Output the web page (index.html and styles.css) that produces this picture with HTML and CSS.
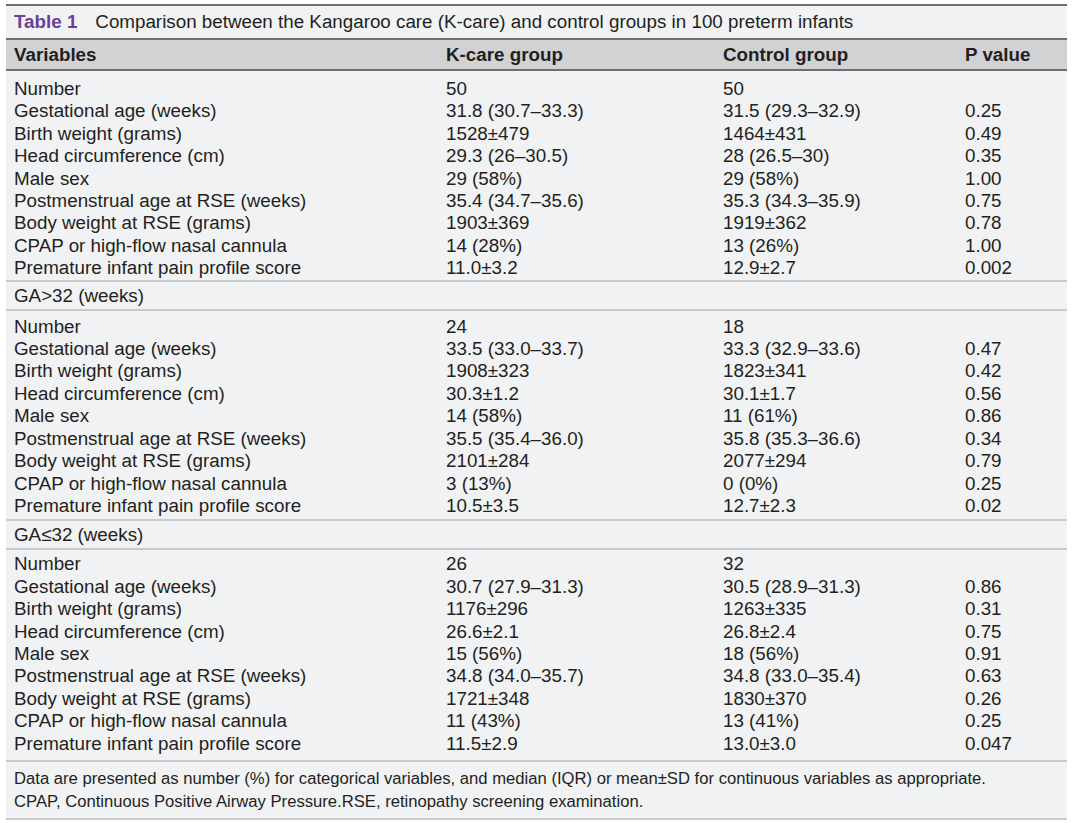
FILE: index.html
```html
<!DOCTYPE html>
<html>
<head>
<meta charset="utf-8">
<link rel="stylesheet" href="styles.css">
</head>
<body>
<div class="table">
  <div class="caption"><span class="tno">Table 1</span><span class="ctext">Comparison between the Kangaroo care (K-care) and control groups in 100 preterm infants</span></div>
  <div class="row head"><div>Variables</div><div>K-care group</div><div>Control group</div><div>P value</div></div>
  <div class="block b1">
    <div class="row"><div>Number</div><div>50</div><div>50</div><div></div></div>
    <div class="row"><div>Gestational age (weeks)</div><div>31.8 (30.7–33.3)</div><div>31.5 (29.3–32.9)</div><div>0.25</div></div>
    <div class="row"><div>Birth weight (grams)</div><div>1528±479</div><div>1464±431</div><div>0.49</div></div>
    <div class="row"><div>Head circumference (cm)</div><div>29.3 (26–30.5)</div><div>28 (26.5–30)</div><div>0.35</div></div>
    <div class="row"><div>Male sex</div><div>29 (58%)</div><div>29 (58%)</div><div>1.00</div></div>
    <div class="row"><div>Postmenstrual age at RSE (weeks)</div><div>35.4 (34.7–35.6)</div><div>35.3 (34.3–35.9)</div><div>0.75</div></div>
    <div class="row"><div>Body weight at RSE (grams)</div><div>1903±369</div><div>1919±362</div><div>0.78</div></div>
    <div class="row"><div>CPAP or high-flow nasal cannula</div><div>14 (28%)</div><div>13 (26%)</div><div>1.00</div></div>
    <div class="row"><div>Premature infant pain profile score</div><div>11.0±3.2</div><div>12.9±2.7</div><div>0.002</div></div>
  </div>
  <div class="group">GA&gt;32 (weeks)</div>
  <div class="block b2">
    <div class="row"><div>Number</div><div>24</div><div>18</div><div></div></div>
    <div class="row"><div>Gestational age (weeks)</div><div>33.5 (33.0–33.7)</div><div>33.3 (32.9–33.6)</div><div>0.47</div></div>
    <div class="row"><div>Birth weight (grams)</div><div>1908±323</div><div>1823±341</div><div>0.42</div></div>
    <div class="row"><div>Head circumference (cm)</div><div>30.3±1.2</div><div>30.1±1.7</div><div>0.56</div></div>
    <div class="row"><div>Male sex</div><div>14 (58%)</div><div>11 (61%)</div><div>0.86</div></div>
    <div class="row"><div>Postmenstrual age at RSE (weeks)</div><div>35.5 (35.4–36.0)</div><div>35.8 (35.3–36.6)</div><div>0.34</div></div>
    <div class="row"><div>Body weight at RSE (grams)</div><div>2101±284</div><div>2077±294</div><div>0.79</div></div>
    <div class="row"><div>CPAP or high-flow nasal cannula</div><div>3 (13%)</div><div>0 (0%)</div><div>0.25</div></div>
    <div class="row"><div>Premature infant pain profile score</div><div>10.5±3.5</div><div>12.7±2.3</div><div>0.02</div></div>
  </div>
  <div class="group">GA≤32 (weeks)</div>
  <div class="block b3">
    <div class="row"><div>Number</div><div>26</div><div>32</div><div></div></div>
    <div class="row"><div>Gestational age (weeks)</div><div>30.7 (27.9–31.3)</div><div>30.5 (28.9–31.3)</div><div>0.86</div></div>
    <div class="row"><div>Birth weight (grams)</div><div>1176±296</div><div>1263±335</div><div>0.31</div></div>
    <div class="row"><div>Head circumference (cm)</div><div>26.6±2.1</div><div>26.8±2.4</div><div>0.75</div></div>
    <div class="row"><div>Male sex</div><div>15 (56%)</div><div>18 (56%)</div><div>0.91</div></div>
    <div class="row"><div>Postmenstrual age at RSE (weeks)</div><div>34.8 (34.0–35.7)</div><div>34.8 (33.0–35.4)</div><div>0.63</div></div>
    <div class="row"><div>Body weight at RSE (grams)</div><div>1721±348</div><div>1830±370</div><div>0.26</div></div>
    <div class="row"><div>CPAP or high-flow nasal cannula</div><div>11 (43%)</div><div>13 (41%)</div><div>0.25</div></div>
    <div class="row"><div>Premature infant pain profile score</div><div>11.5±2.9</div><div>13.0±3.0</div><div>0.047</div></div>
  </div>
  <div class="foot">
    <p>Data are presented as number (%) for categorical variables, and median (IQR) or mean±SD for continuous variables as appropriate.</p>
    <p>CPAP, Continuous Positive Airway Pressure.RSE, retinopathy screening examination.</p>
  </div>
</div>
</body>
</html>
```

FILE: styles.css
```css
* { box-sizing: border-box; }
html, body { margin: 0; padding: 0; background: #ffffff; }
body {
  font-family: "Liberation Sans", Arial, sans-serif;
  color: #231f20;
  font-size: 18.8px;
  padding: 4px 0 0 6px;
}
.table {
  width: 1061px;
  background: #f1f2f4;
  border-top: 2px solid #6d6e70;
  border-bottom: 2px solid #c9cacc;
}
.caption {
  height: 32px;
  line-height: 32px;
  padding-left: 8px;
  white-space: nowrap;
}
.tno {
  color: #6b3f99;
  font-weight: bold;
  margin-right: 18px;
}
.row {
  display: grid;
  grid-template-columns: 432px 277px 242px 1fr;
  padding-left: 8px;
  line-height: 22.4px;
  white-space: nowrap;
}
.row.head {
  background: #d1d2d4;
  border-top: 2px solid #6d6e70;
  border-bottom: 2px solid #6d6e70;
  font-weight: bold;
  line-height: 29px;
}
.block { padding: 7px 0 0; }
.b2 { padding: 5px 0 2px; }
.b3 { padding: 3px 0 5px; }
.group {
  border-top: 2px solid #c9cacc;
  border-bottom: 2px solid #c9cacc;
  padding-left: 8px;
  line-height: 27px;
}
.foot {
  border-top: 2px solid #c9cacc;
  padding: 5.5px 0 4.5px 8px;
  font-size: 16.65px;
  line-height: 23px;
}
.foot p { margin: 0; }
```
